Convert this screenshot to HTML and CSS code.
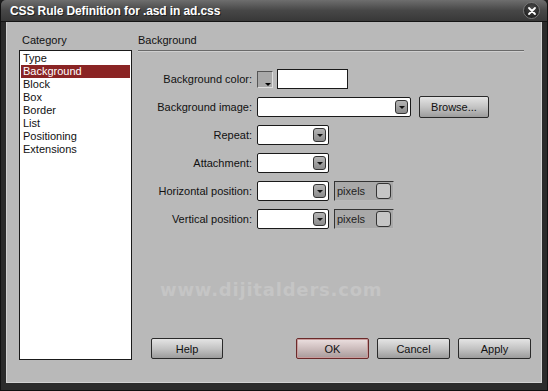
FILE: index.html
```html
<!DOCTYPE html>
<html lang="en">
<head>
    <meta charset="UTF-8">
    <title>CSS Rule Definition</title>
    <link rel="stylesheet" href="styles.css">
</head>
<body>
    <div class="window">
        <div class="titlebar">
            <span class="title">CSS Rule Definition for .asd in ad.css</span>
            <span class="close-btn">
                <svg width="10" height="10" viewBox="0 0 10 10"><path d="M2 2 L8 8 M8 2 L2 8" stroke="#fff" stroke-width="1.8" stroke-linecap="round"/></svg>
            </span>
        </div>

        <div class="dialog-body">
            <div class="category-col">
                <div class="col-label">Category</div>
                <ul class="category-list">
                    <li>Type</li>
                    <li class="selected">Background</li>
                    <li>Block</li>
                    <li>Box</li>
                    <li>Border</li>
                    <li>List</li>
                    <li>Positioning</li>
                    <li>Extensions</li>
                </ul>
            </div>

            <div class="panel-col">
                <div class="col-label">Background</div>
                <div class="panel-rule"></div>

                <div class="form-grid">
                    <label>Background color:</label>
                    <div class="control">
                        <span class="swatch"></span>
                        <span class="textbox color-text"></span>
                    </div>

                    <label>Background image:</label>
                    <div class="control">
                        <span class="select wide"><span class="arrow"></span></span>
                        <span class="btn browse">Browse...</span>
                    </div>

                    <label>Repeat:</label>
                    <div class="control">
                        <span class="select"><span class="arrow"></span></span>
                    </div>

                    <label>Attachment:</label>
                    <div class="control">
                        <span class="select"><span class="arrow"></span></span>
                    </div>

                    <label>Horizontal position:</label>
                    <div class="control">
                        <span class="select"><span class="arrow"></span></span>
                        <span class="units">pixels<span class="units-btn"></span></span>
                    </div>

                    <label>Vertical position:</label>
                    <div class="control">
                        <span class="select"><span class="arrow"></span></span>
                        <span class="units">pixels<span class="units-btn"></span></span>
                    </div>
                </div>

                <div class="watermark">www.dijitalders.com</div>

                <div class="button-row">
                    <span class="btn help">Help</span>
                    <span class="btn ok">OK</span>
                    <span class="btn">Cancel</span>
                    <span class="btn">Apply</span>
                </div>
            </div>
        </div>
    </div>
</body>
</html>
```

FILE: styles.css
```css
* {
    margin: 0;
    padding: 0;
    box-sizing: border-box;
}

body {
    width: 548px;
    height: 391px;
    overflow: hidden;
    background: #1e1e1e;
    font-family: "Liberation Sans", Arial, sans-serif;
    font-size: 11px;
    color: #111;
}

.window {
    width: 548px;
    height: 391px;
    display: flex;
    flex-direction: column;
    background: #2b2b2b;
    border-radius: 5px 5px 0 0;
    border-left: 1px solid #111;
    border-right: 1px solid #111;
    border-bottom: 1px solid #111;
}

/* Title bar */
.titlebar {
    height: 22px;
    flex-shrink: 0;
    display: flex;
    align-items: center;
    justify-content: space-between;
    padding: 0 7px 0 9px;
    background: linear-gradient(#6e6e6e, #474747 50%, #383838);
    border-bottom: 1px solid #141414;
    border-radius: 5px 5px 0 0;
}

.title {
    color: #fff;
    font-weight: bold;
    font-size: 12px;
    letter-spacing: -0.1px;
    text-shadow: 1px 1px 0 #222;
}

.close-btn {
    width: 17px;
    height: 17px;
    border-radius: 50%;
    background: radial-gradient(circle at 50% 35%, #4a4a4a, #141414);
    border: 1px solid #777;
    display: flex;
    align-items: center;
    justify-content: center;
}

/* Body */
.dialog-body {
    flex: 1;
    display: flex;
    margin: 0 5px 7px 5px;
    padding: 12px 10px 22px 12px;
    background: #b9b9b9;
    border: 1px solid #d2d2d2;
    border-top: none;
}

.col-label {
    height: 16px;
    line-height: 13px;
    padding-left: 3px;
}

.category-col {
    width: 113px;
    display: flex;
    flex-direction: column;
}

.category-list {
    list-style: none;
    flex: 1;
    background: #fff;
    border: 1px solid #1a1a1a;
    padding: 1px 1px;
}

.category-list li {
    height: 13px;
    line-height: 13px;
    padding-left: 2px;
    font-size: 11px;
}

.category-list li.selected {
    background: #8a2424;
    color: #fff;
}

.panel-col {
    flex: 1;
    margin-left: 6px;
    display: flex;
    flex-direction: column;
}

.panel-col .col-label {
    padding-left: 0;
}

.panel-rule {
    height: 2px;
    margin-right: 7px;
    border-top: 1px solid #6a6a6a;
    border-bottom: 1px solid #cfcfcf;
}

/* Form */
.form-grid {
    display: grid;
    grid-template-columns: 114px 1fr;
    column-gap: 5px;
    row-gap: 8px;
    margin-top: 17px;
}

.form-grid label {
    text-align: right;
    align-self: center;
}

.control {
    display: flex;
    align-items: center;
    gap: 5px;
    height: 20px;
}

.swatch {
    position: relative;
    width: 16px;
    height: 17px;
    background: #a9a9a9;
    border: 1px solid;
    border-color: #555 #ddd #ddd #555;
    margin-right: -1px;
}

.swatch::after {
    content: "";
    position: absolute;
    right: 1px;
    bottom: 1px;
    border-left: 3px solid transparent;
    border-right: 3px solid transparent;
    border-top: 3px solid #000;
}

.textbox {
    height: 20px;
    background: #fff;
    border: 1px solid #1a1a1a;
}

.color-text {
    width: 71px;
}

.select {
    width: 72px;
    height: 20px;
    background: #fff;
    border: 1px solid #1a1a1a;
    border-radius: 2px;
    display: flex;
    justify-content: flex-end;
    align-items: center;
    padding-right: 2px;
}

.select.wide {
    width: 154px;
}

.arrow {
    width: 13px;
    height: 14px;
    border-radius: 3px;
    background: linear-gradient(#b4b4b4, #8c8c8c);
    border: 1px solid #333;
    display: flex;
    align-items: center;
    justify-content: center;
}

.arrow::after {
    content: "";
    border-left: 3px solid transparent;
    border-right: 3px solid transparent;
    border-top: 3px solid #111;
}

.units {
    width: 60px;
    height: 20px;
    background: #a9a9a9;
    border: 1px solid;
    border-color: #333 #bbb #bbb #333;
    display: flex;
    align-items: center;
    justify-content: space-between;
    padding: 0 2px 0 2px;
    color: #222;
}

.units-btn {
    width: 15px;
    height: 16px;
    border-radius: 3px;
    background: #c6c6c6;
    border: 1px solid #333;
}

/* Buttons */
.btn {
    width: 73px;
    height: 21px;
    display: flex;
    align-items: center;
    justify-content: center;
    border: 1px solid #2a2a2a;
    border-radius: 2px;
    background: linear-gradient(#e4e4e4, #c4c4c4 50%, #9c9c9c);
    color: #111;
}

.browse {
    width: 70px;
    height: 22px;
    margin-left: 3px;
}

.btn.ok {
    border-color: #6b2a2a;
    box-shadow: inset 0 0 0 1px #c89c9c;
    background: linear-gradient(#ece0e0, #cdbdbd 50%, #a89b9b);
}

.watermark {
    margin: 50px 0 0 22px;
    font-family: "DejaVu Sans", sans-serif;
    font-weight: bold;
    font-size: 18px;
    letter-spacing: 0.8px;
    color: #c5c5c5;
}

.button-row {
    margin-top: auto;
    margin-bottom: 1px;
    display: flex;
    gap: 8px;
}

.btn.help {
    width: 72px;
    margin-left: 13px;
    margin-right: auto;
}
```
